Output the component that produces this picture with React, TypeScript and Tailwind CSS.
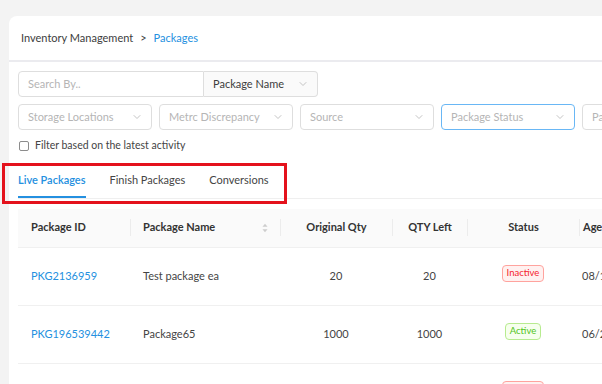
import { ChevronDown } from "lucide-react";

const font = { fontFamily: "Lato, 'Noto Sans', sans-serif" };

function Select({ label, active = false }: { label: string; active?: boolean }) {
  return (
    <div
      className={`flex h-[26px] w-[134px] shrink-0 items-center justify-between rounded-[4px] border bg-white pl-[9px] pr-[8px] text-[11px] text-[#b5b5b5] ${
        active ? "border-[#69b7f5]" : "border-[#dedede]"
      }`}
    >
      <span>{label}</span>
      <ChevronDown className="h-[12px] w-[12px] text-[#b0b0b0]" strokeWidth={1.5} />
    </div>
  );
}

function Badge({ status }: { status: "Active" | "Inactive" }) {
  const cls =
    status === "Active"
      ? "border-[#b7eb8f] bg-[#f6ffed] text-[#52c41a]"
      : "border-[#ffa39e] bg-[#fff1f0] text-[#f5222d]";
  return (
    <span className={`-mt-[5px] inline-flex h-[17px] items-center rounded-[4px] border px-[4px] text-[9.5px] ${cls}`}>
      {status}
    </span>
  );
}

const rows = [
  { id: "PKG2136959", name: "Test package ea", orig: "20", left: "20", status: "Inactive" as const, date: "08/12/2023" },
  { id: "PKG196539442", name: "Package65", orig: "1000", left: "1000", status: "Active" as const, date: "06/28/2023" },
  { id: "PKG196539001", name: "Package64", orig: "500", left: "500", status: "Inactive" as const, date: "06/20/2023" },
];

const cols = "grid grid-cols-[112px_150px_112px_75px_112px_120px]";

export default function App() {
  return (
    <div className="relative h-[384px] w-[602px] overflow-hidden bg-[#f3f3f3] pl-[9px] pt-[16px]" style={font}>
      <div className="h-[420px] w-[660px] rounded-tl-[8px] bg-white">
        <div className="flex h-[46px] items-center border-b-2 border-[#ebebef] pl-[12px] text-[11px] text-[#3d3d3d]">
          <span>Inventory Management</span>
          <span className="mx-[7px]">&gt;</span>
          <span className="text-[#2490e0]">Packages</span>
        </div>

        <div className="px-[9px] pt-[9px]">
          <div className="flex">
            <div className="flex h-[26px] w-[186px] items-center rounded-l-[4px] border border-[#dedede] pl-[9px] text-[11px] text-[#b5b5b5]">
              Search By..
            </div>
            <div className="flex h-[26px] w-[114px] items-center justify-between rounded-r-[4px] border border-l-0 border-[#dedede] bg-[#fafafa] pl-[9px] pr-[8px] text-[11px] text-[#3d3d3d]">
              <span>Package Name</span>
              <ChevronDown className="h-[12px] w-[12px] text-[#b0b0b0]" strokeWidth={1.5} />
            </div>
          </div>

          <div className="mt-[7px] flex gap-[7px]">
            <Select label="Storage Locations" />
            <Select label="Metrc Discrepancy" />
            <Select label="Source" />
            <Select label="Package Status" active />
            <Select label="Package Type" />
          </div>

          <label className="mt-[9px] flex h-[14px] items-center gap-[6px] pl-[1px] text-[10.5px] text-[#444]">
            <span className="h-[10px] w-[10px] rounded-[2px] border border-[#8c8c8c] bg-white" />
            Filter based on the latest activity
          </label>

          <div className="mt-[19px] flex gap-[24px] border-b border-[#efefef] text-[11px]">
            <div className="border-b-2 border-[#2490e0] pb-[7px] font-semibold text-[#2490e0]">Live Packages</div>
            <div className="pb-[7px] text-[#444]">Finish Packages</div>
            <div className="pb-[7px] text-[#444]">Conversions</div>
          </div>

          <div className="mt-[10px] text-[11px]">
            <div className={`${cols} h-[39px] items-center border-b border-[#f0f0f0] bg-[#fafafa] font-bold text-[#333]`}>
              <div className="pl-[13px]">Package ID</div>
              <div className="flex items-center justify-between border-l border-[#ececec] pl-[12px] pr-[12px]">
                <span>Package Name</span>
                <svg width="6" height="10" viewBox="0 0 7 11" className="text-[#cdcdcd]">
                  <path d="M3.5 0.5 L6.5 4 L0.5 4 Z" fill="currentColor" />
                  <path d="M3.5 10.5 L6.5 7 L0.5 7 Z" fill="currentColor" />
                </svg>
              </div>
              <div className="border-l border-[#ececec] text-center">Original Qty</div>
              <div className="border-l border-[#ececec] text-center">QTY Left</div>
              <div className="border-l border-[#ececec] text-center">Status</div>
              <div className="border-l border-[#ececec] pl-[3px]">Age</div>
            </div>
            {rows.map((r) => (
              <div key={r.id} className={`${cols} h-[58px] items-center border-b border-[#f0f0f0] text-[#444]`}>
                <div className="pl-[13px] text-[#2490e0]">{r.id}</div>
                <div className="pl-[13px]">{r.name}</div>
                <div className="text-center">{r.orig}</div>
                <div className="text-center">{r.left}</div>
                <div className="flex justify-center">
                  <Badge status={r.status} />
                </div>
                <div className="pl-[3px]">{r.date}</div>
              </div>
            ))}
          </div>
        </div>
      </div>

      <div className="absolute left-[2px] top-[163px] h-[41px] w-[285px] border-[3px] border-[#e4121c]" />
    </div>
  );
}
